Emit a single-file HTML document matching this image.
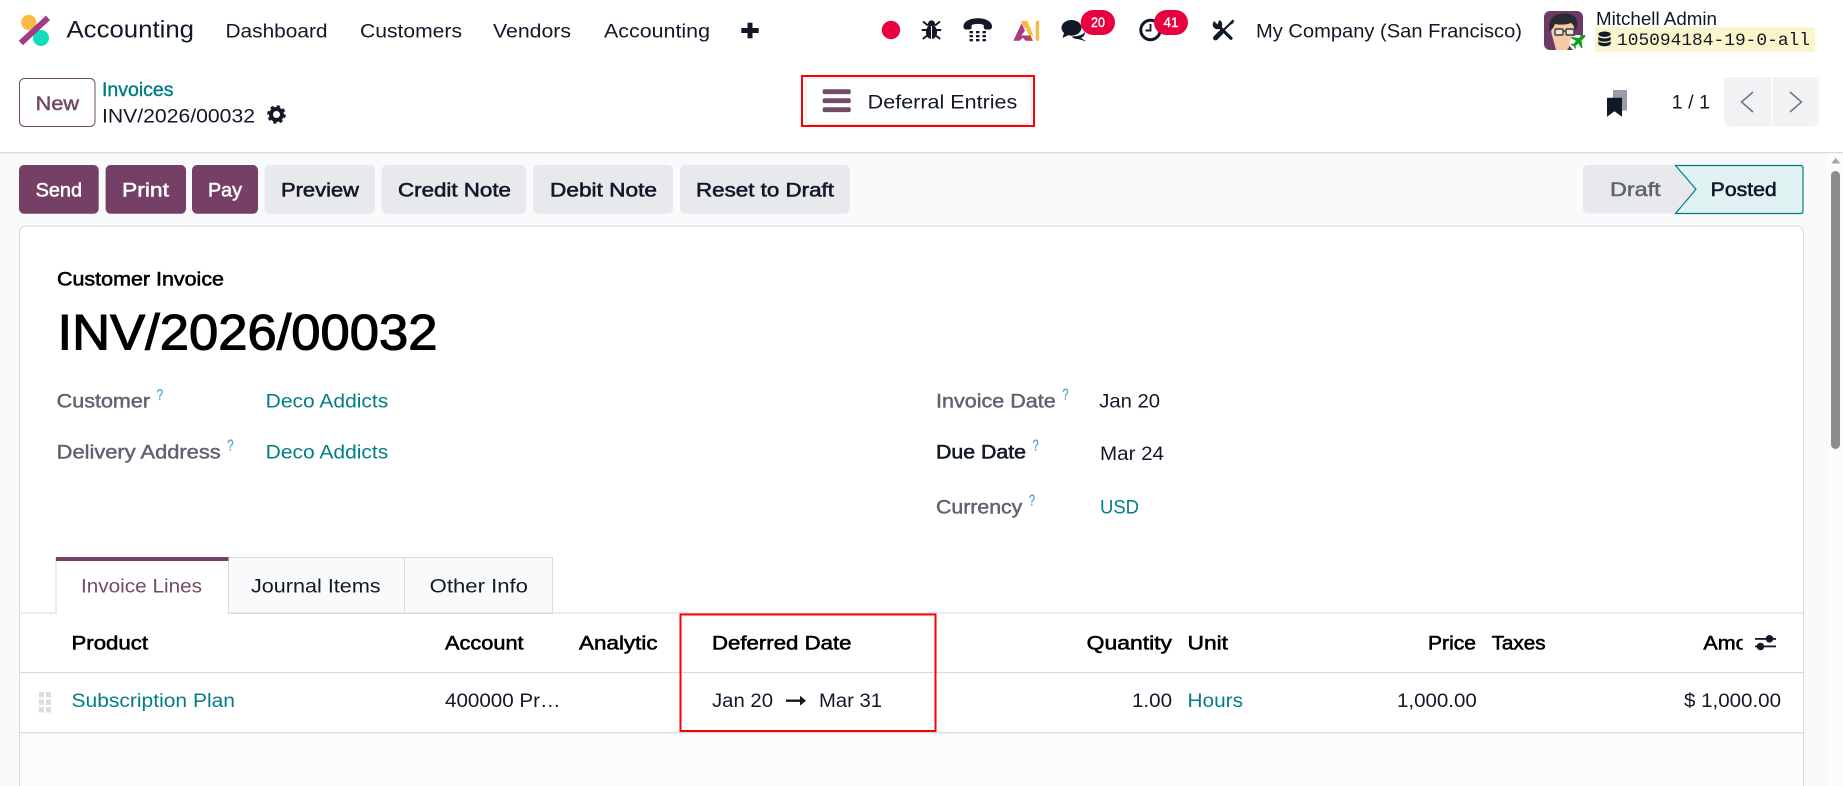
<!DOCTYPE html>
<html lang="en"><head><meta charset="utf-8"><title>Accounting - INV/2026/00032</title>
<style>
html,body{margin:0;padding:0;background:#f9fafb;overflow:hidden}
svg{display:block}
text{font-family:"Liberation Sans",sans-serif;font-size:19px;fill:#111827}
.m{stroke:#111827;stroke-width:.55px;paint-order:stroke}
.w{fill:#fff;stroke:#fff;stroke-width:.5px}
.l{fill:#017e84}
.g{fill:#5f6270;stroke:#5f6270;stroke-width:.45px}
.q{fill:#4fa3d1;stroke:#4fa3d1;stroke-width:.3px;font-size:15.5px}
</style></head><body>
<svg width="1843" height="786" viewBox="0 0 1843 786" xmlns="http://www.w3.org/2000/svg">
<defs><clipPath id="amt"><rect x="1700" y="630" width="42.7" height="30"/></clipPath></defs>
<rect width="1843" height="786" fill="#f9fafb"/>
<rect width="1843" height="152" fill="#fff"/>
<rect y="152" width="1843" height="1.3" fill="#d8dadd"/>

<!-- logo -->
<circle cx="28.8" cy="22.5" r="7.6" fill="#fbb945"/>
<circle cx="41" cy="38" r="8" fill="#0fdcbb"/>
<line x1="20.8" y1="43" x2="48" y2="17.8" stroke="#a23a84" stroke-width="6"/>
<text x="66.5" y="37.6" style="font-size:24.5px" textLength="127.5" lengthAdjust="spacingAndGlyphs">Accounting</text>

<!-- nav -->
<text x="225.5" y="37.7" textLength="102" lengthAdjust="spacingAndGlyphs">Dashboard</text>
<text x="360" y="37.7" textLength="102" lengthAdjust="spacingAndGlyphs">Customers</text>
<text x="493" y="37.7" textLength="78" lengthAdjust="spacingAndGlyphs">Vendors</text>
<text x="604" y="37.7" textLength="106" lengthAdjust="spacingAndGlyphs">Accounting</text>
<rect x="741.3" y="28" width="17.4" height="5" fill="#111827"/>
<rect x="747.5" y="22.7" width="5" height="15.6" fill="#111827"/>

<!-- systray -->
<circle cx="891" cy="30" r="9.2" fill="#e9003f"/>
<g fill="#111827">
<ellipse cx="931.5" cy="32" rx="5.6" ry="7"/>
<circle cx="931.5" cy="24" r="3.6"/>
<path d="M923 21.5l5 4M940 21.5l-5 4M921.8 30h19.400M922.8 39l4.500-3.500M940.2 39l-4.500-3.500" stroke="#111827" stroke-width="1.9" fill="none"/>
<rect x="931" y="26" width="1" height="13" fill="#fff"/>
<path d="M963.5 26.5c0-11 28.5-11 28.5 0 0 1.800-1 3-2.500 3h-3.500c-1.500 0-2.300-1-2.300-2.500v-2c-3.500-1.500-8-1.500-12 0v2c0 1.500-.8 2.500-2.300 2.500H966c-1.500 0-2.500-1.200-2.500-3z"/>
<g><rect x="969.5" y="31" width="3.4" height="2.3"/><rect x="976" y="31" width="3.4" height="2.3"/><rect x="982.5" y="31" width="3.4" height="2.3"/><rect x="969.5" y="35" width="3.4" height="2.3"/><rect x="976" y="35" width="3.4" height="2.3"/><rect x="982.5" y="35" width="3.4" height="2.3"/><rect x="969.5" y="39" width="3.4" height="2.3"/><rect x="976" y="39" width="3.4" height="2.3"/><rect x="982.5" y="39" width="3.4" height="2.3"/></g>
</g>
<!-- AI mark -->
<path d="M1013.3 40.7L1021.5 23.500 1025 30.500 1021.500 35.500H1030L1032.800 40.700H1025.500L1023 37.700 1019.500 40.700z" fill="#a93b88"/>
<path d="M1021 21h6.500l5.800 14.500h-4.300l-3-6.500-2.800-2.500z" fill="#fbb945"/>
<path d="M1027 35.500h3.500l2.500 5.200h-4.500z" fill="#c0483f"/>
<rect x="1035.7" y="20.7" width="3.4" height="20" fill="#fbb945"/>
<!-- chat -->
<g fill="#111827">
<path d="M1085 31.5a8.500 6.500 0 0 1-4 6.500l5.500 3.500-8.500-2.500c-3 0-5-1-6.500-2.500 7 0 12.500-2 13.500-5z" />
<ellipse cx="1071.5" cy="27.8" rx="10" ry="7.8"/>
<path d="M1064 33l-1.500 5 6-3z"/>
</g>
<rect x="1080.7" y="10" width="34.3" height="25" rx="12.5" fill="#e9003f"/>
<text x="1091" y="26.8" style="font-size:14px;fill:#fff;stroke:#fff;stroke-width:.4px" textLength="14" lengthAdjust="spacingAndGlyphs">20</text>
<!-- clock -->
<circle cx="1150.5" cy="30" r="9.7" fill="none" stroke="#111827" stroke-width="3"/>
<path d="M1150.5 24v6.500h-5" fill="none" stroke="#111827" stroke-width="1.9"/>
<rect x="1154" y="10" width="34" height="25" rx="12.5" fill="#e9003f"/>
<text x="1163.5" y="26.8" style="font-size:14px;fill:#fff;stroke:#fff;stroke-width:.4px" textLength="15" lengthAdjust="spacingAndGlyphs">41</text>
<!-- tools: wrench + screwdriver -->
<g fill="none" stroke="#111827" stroke-linecap="round">
<path d="M1218.5 26l12.500 12.300" stroke-width="3.2"/>
<path d="M1232.500 21.500L1222.500 31" stroke-width="2.200"/>
<path d="M1221 32.500L1215.500 38" stroke-width="4.800"/>
</g>
<circle cx="1217.500" cy="24.500" r="4.800" fill="#111827"/>
<path d="M1212 19l5.500 5.500 2-5.500z" fill="#fff"/>
<path d="M1229.500 23l3-3.500 2 1.500-2.500 3.500z" fill="#111827"/>
<text x="1256" y="37.7" textLength="266" lengthAdjust="spacingAndGlyphs">My Company (San Francisco)</text>

<!-- avatar -->
<rect x="1544" y="11" width="39" height="39" rx="6" fill="#6d3a68"/>
<path d="M1552 35c-2-8 0-16 7-17 8-3 15 1 15 9l-1 14-6 9h-11z" fill="#f5c9a4"/>
<path d="M1550 31c-3-10 3-17 11-17 8-2 15 1 16 7 1 3 0 7-1 9-2-3-3-6-5-7-5 2-11 2-16 1-1 2-2 5-5 7z" fill="#2b2a33"/>
<rect x="1555" y="29" width="8" height="6" rx="1" fill="#e8e3dc" stroke="#3a3a3a" stroke-width="1.4"/>
<rect x="1566" y="29" width="8" height="6" rx="1" fill="#e8e3dc" stroke="#3a3a3a" stroke-width="1.4"/>
<path d="M1563 31h3" stroke="#3a3a3a" stroke-width="1.4"/>
<circle cx="1577.5" cy="43" r="8" fill="#fff"/>
<path d="M1583.5 36.5l-3.500 3.500-7-1-1 1 5 3-2.500 3-2-.5-1 1 3 1.500 1.500 3 1-1-.5-2 3-2.500 3 5 1-1-1-7 3.500-3.500c1-1.500-.5-3-2-1.500z" fill="#0ea01a" transform="translate(-1 -2)"/>
<text x="1596" y="25" style="font-size:18px" textLength="121" lengthAdjust="spacingAndGlyphs">Mitchell Admin</text>
<rect x="1595" y="27.3" width="220" height="24.4" fill="#fbf5cc"/>
<g fill="#111827"><ellipse cx="1604.5" cy="34.2" rx="6.2" ry="2.7"/><path d="M1598.3 36.5c1.500 2.500 11 2.500 12.400 0v3.200c-1.500 2.500-11 2.500-12.400 0zM1598.3 41c1.500 2.500 11 2.500 12.400 0v3c-1.500 3-11 3-12.400 0z"/></g>
<text x="1617" y="45" style='font-family:"Liberation Mono",monospace;font-size:17.8px' textLength="193" lengthAdjust="spacingAndGlyphs">105094184-19-0-all</text>

<!-- control panel -->
<rect x="19.500" y="78.500" width="75.500" height="48" rx="5" fill="#fff" stroke="#714b67"/>
<text x="35.7" y="110" style="fill:#714b67;stroke:#714b67;stroke-width:.5px" textLength="43.3" lengthAdjust="spacingAndGlyphs">New</text>
<text x="102" y="96" class="l" style="stroke:#017e84;stroke-width:.4px" textLength="71.5" lengthAdjust="spacingAndGlyphs">Invoices</text>
<text x="102" y="122.3" textLength="153" lengthAdjust="spacingAndGlyphs">INV/2026/00032</text>
<circle cx="276.5" cy="114.5" r="5.5" fill="none" stroke="#111827" stroke-width="4"/>
<circle cx="276.5" cy="114.5" r="8" fill="none" stroke="#111827" stroke-width="2.6" stroke-dasharray="3.2 3.08"/>

<rect x="806" y="78" width="225" height="46.500" rx="5" fill="#fff" stroke="#e3e4e7"/>
<rect x="802" y="76" width="232" height="50" fill="none" stroke="#f00" stroke-width="2"/>
<rect x="822.7" y="89.3" width="28" height="4.8" rx="1.5" fill="#714b67"/>
<rect x="822.7" y="98.3" width="28" height="4.8" rx="1.5" fill="#714b67"/>
<rect x="822.7" y="107.3" width="28" height="4.8" rx="1.5" fill="#714b67"/>
<text x="867.7" y="108.5" textLength="149.6" lengthAdjust="spacingAndGlyphs">Deferral Entries</text>

<rect x="1613" y="90" width="14" height="20.500" fill="#9a9da5"/>
<path d="M1607 97.700h15v19l-7.500-5.500-7.500 5.500z" fill="#111827"/>
<text x="1671.7" y="108.5" textLength="38.3" lengthAdjust="spacingAndGlyphs">1 / 1</text>
<path d="M1729 77h42v49h-42a5 5 0 0 1-5-5v-39a5 5 0 0 1 5-5z" fill="#f1f2f4"/>
<path d="M1772.3 77h41.700a5 5 0 0 1 5 5v39a5 5 0 0 1-5 5h-41.700z" fill="#f1f2f4"/>
<path d="M1753 92l-11.500 10 11.500 10M1790 92l11.500 10-11.500 10" fill="none" stroke="#6b7280" stroke-width="1.5"/>

<!-- action buttons -->
<g fill="#763f65">
<rect x="19" y="165" width="79.7" height="48.7" rx="5"/>
<rect x="105.600" y="165" width="80.4" height="48.7" rx="5"/>
<rect x="192" y="165" width="66" height="48.7" rx="5"/>
</g>
<g fill="#e7e9ed">
<rect x="264.600" y="165" width="110.4" height="48.7" rx="5"/>
<rect x="381.700" y="165" width="144.7" height="48.7" rx="5"/>
<rect x="533" y="165" width="140" height="48.7" rx="5"/>
<rect x="680" y="165" width="170" height="48.7" rx="5"/>
</g>
<text class="w" x="35.600" y="196.700" textLength="46.4" lengthAdjust="spacingAndGlyphs">Send</text>
<text class="w" x="122" y="196.700" textLength="47" lengthAdjust="spacingAndGlyphs">Print</text>
<text class="w" x="208" y="196.700" textLength="34" lengthAdjust="spacingAndGlyphs">Pay</text>
<text class="m" x="281" y="196.700" textLength="78" lengthAdjust="spacingAndGlyphs">Preview</text>
<text class="m" x="398" y="196.700" textLength="113" lengthAdjust="spacingAndGlyphs">Credit Note</text>
<text class="m" x="550" y="196.700" textLength="107" lengthAdjust="spacingAndGlyphs">Debit Note</text>
<text class="m" x="696" y="196.700" textLength="138" lengthAdjust="spacingAndGlyphs">Reset to Draft</text>

<!-- status bar -->
<path d="M1588 165h88l21 24.200-21 24.300h-88a5 5 0 0 1-5-5V170a5 5 0 0 1 5-5z" fill="#e7e9ed"/>
<path d="M1675.500 165.500h125.500a2 2 0 0 1 2 2v44a2 2 0 0 1-2 2h-125.500l20.500-24.300z" fill="#e1f2f3" stroke="#017e84" stroke-width="1.2"/>
<text class="g" x="1610" y="196" textLength="50.7" lengthAdjust="spacingAndGlyphs">Draft</text>
<text class="m" x="1710.700" y="196" textLength="66" lengthAdjust="spacingAndGlyphs">Posted</text>

<!-- card -->
<path d="M19.500 790V232a6 6 0 0 1 6-6h1772a6 6 0 0 1 6 6v558z" fill="#fff" stroke="#d8dadd"/>
<rect x="20" y="733" width="1783" height="60" fill="#fbfbfb"/>

<text class="m" x="57" y="285.700" style="fill:#000;stroke:#000" textLength="167" lengthAdjust="spacingAndGlyphs">Customer Invoice</text>
<text x="57.500" y="349.500" style="font-size:50px;fill:#000;stroke:#000;stroke-width:1.1px" textLength="380" lengthAdjust="spacingAndGlyphs">INV/2026/00032</text>

<text class="g" x="56.700" y="407.700" textLength="93.3" lengthAdjust="spacingAndGlyphs">Customer</text>
<text class="q" x="156.700" y="400" textLength="6.3" lengthAdjust="spacingAndGlyphs">?</text>
<text class="l" x="265.700" y="407.700" textLength="122.6" lengthAdjust="spacingAndGlyphs">Deco Addicts</text>
<text class="g" x="56.700" y="458.300" textLength="164" lengthAdjust="spacingAndGlyphs">Delivery Address</text>
<text class="q" x="227.300" y="450.700" textLength="6.3" lengthAdjust="spacingAndGlyphs">?</text>
<text class="l" x="265.700" y="458.300" textLength="122.6" lengthAdjust="spacingAndGlyphs">Deco Addicts</text>

<text class="g" x="936" y="407.700" textLength="119.7" lengthAdjust="spacingAndGlyphs">Invoice Date</text>
<text class="q" x="1062.500" y="399.300" textLength="6" lengthAdjust="spacingAndGlyphs">?</text>
<text x="1099.300" y="407.700" textLength="60.7" lengthAdjust="spacingAndGlyphs">Jan 20</text>
<text class="m" x="936" y="458.300" textLength="90" lengthAdjust="spacingAndGlyphs">Due Date</text>
<text class="q" x="1032.700" y="450.500" textLength="6" lengthAdjust="spacingAndGlyphs">?</text>
<text x="1100" y="460" textLength="64" lengthAdjust="spacingAndGlyphs">Mar 24</text>
<text class="g" x="936" y="513.300" textLength="86.3" lengthAdjust="spacingAndGlyphs">Currency</text>
<text class="q" x="1029" y="505.700" textLength="6" lengthAdjust="spacingAndGlyphs">?</text>
<text class="l" x="1100" y="513.300" textLength="39" lengthAdjust="spacingAndGlyphs">USD</text>

<!-- tabs -->
<rect x="228.500" y="557.500" width="324" height="56" fill="#f9fafb" stroke="#d8dadd"/>
<rect x="404" y="558" width="1" height="55" fill="#d8dadd"/>
<rect x="19.500" y="612.500" width="1784" height="1" fill="#d8dadd"/>
<rect x="55.800" y="558" width="172.7" height="56" fill="#fff"/>
<rect x="55.500" y="560" width="1" height="54" fill="#d8dadd"/>
<rect x="228" y="560" width="1" height="54" fill="#d8dadd"/>
<rect x="55.800" y="557" width="172.7" height="4" fill="#763f65"/>
<text x="81" y="592.700" style="fill:#714b67" textLength="121" lengthAdjust="spacingAndGlyphs">Invoice Lines</text>
<text x="251" y="592.700" textLength="129.6" lengthAdjust="spacingAndGlyphs">Journal Items</text>
<text x="429.700" y="592.700" textLength="98.3" lengthAdjust="spacingAndGlyphs">Other Info</text>

<!-- table -->
<text class="m" x="71.500" y="649.300" style="fill:#000;stroke:#000" textLength="76.5" lengthAdjust="spacingAndGlyphs">Product</text>
<text class="m" x="445" y="649.300" style="fill:#000;stroke:#000" textLength="78.6" lengthAdjust="spacingAndGlyphs">Account</text>
<text class="m" x="579" y="649.300" style="fill:#000;stroke:#000" textLength="78.6" lengthAdjust="spacingAndGlyphs">Analytic</text>
<text class="m" x="712" y="649.300" style="fill:#000;stroke:#000" textLength="139.5" lengthAdjust="spacingAndGlyphs">Deferred Date</text>
<text class="m" x="1086.700" y="649.300" style="fill:#000;stroke:#000" textLength="85.3" lengthAdjust="spacingAndGlyphs">Quantity</text>
<text class="m" x="1187.500" y="649.300" style="fill:#000;stroke:#000" textLength="40.5" lengthAdjust="spacingAndGlyphs">Unit</text>
<text class="m" x="1428" y="649.300" style="fill:#000;stroke:#000" textLength="48" lengthAdjust="spacingAndGlyphs">Price</text>
<text class="m" x="1491.600" y="649.300" style="fill:#000;stroke:#000" textLength="54" lengthAdjust="spacingAndGlyphs">Taxes</text>
<g clip-path="url(#amt)"><text class="m" x="1703.400" y="649.300" style="fill:#000;stroke:#000" textLength="74" lengthAdjust="spacingAndGlyphs">Amount</text></g>
<g fill="#111827"><rect x="1755" y="638" width="21" height="1.8"/><rect x="1755" y="645.500" width="21" height="1.8"/><circle cx="1769.500" cy="638.800" r="3.8"/><circle cx="1760.500" cy="646.500" r="3.8"/></g>

<rect x="19.500" y="672" width="1784" height="1.2" fill="#d8dadd"/>
<rect x="19.500" y="732" width="1784" height="1.2" fill="#d8dadd"/>

<g fill="#dcdde0"><rect x="39" y="692" width="5" height="5.5"/><rect x="46" y="692" width="5" height="5.5"/><rect x="39" y="699.500" width="5" height="5.5"/><rect x="46" y="699.500" width="5" height="5.5"/><rect x="39" y="707" width="5" height="5.5"/><rect x="46" y="707" width="5" height="5.5"/></g>
<text class="l" x="71.500" y="707" textLength="163.5" lengthAdjust="spacingAndGlyphs">Subscription Plan</text>
<text x="445" y="707" textLength="115.6" lengthAdjust="spacingAndGlyphs">400000 Pr…</text>
<text x="712" y="707" textLength="61" lengthAdjust="spacingAndGlyphs">Jan 20</text>
<path d="M786 700.700h15" stroke="#111827" stroke-width="2.4"/><path d="M800 695.800l6 4.900-6 4.900z" fill="#111827"/>
<text x="819" y="707" textLength="63" lengthAdjust="spacingAndGlyphs">Mar 31</text>
<text x="1132" y="707" textLength="40" lengthAdjust="spacingAndGlyphs">1.00</text>
<text class="l" x="1187.500" y="707" textLength="55.5" lengthAdjust="spacingAndGlyphs">Hours</text>
<text x="1397" y="707" textLength="79.8" lengthAdjust="spacingAndGlyphs">1,000.00</text>
<text x="1684" y="707" textLength="97" lengthAdjust="spacingAndGlyphs">$ 1,000.00</text>

<rect x="680.500" y="614.500" width="255" height="116.5" fill="none" stroke="#f00" stroke-width="2"/>

<!-- scrollbar -->
<rect x="1828" y="153.300" width="15" height="633" fill="#fcfcfc"/>
<path d="M1835.700 158l4.500 5.500h-9z" fill="#a3a3a3"/>
<rect x="1831" y="171" width="9" height="278" rx="4.5" fill="#8c8c8c"/>
</svg>
</body></html>
